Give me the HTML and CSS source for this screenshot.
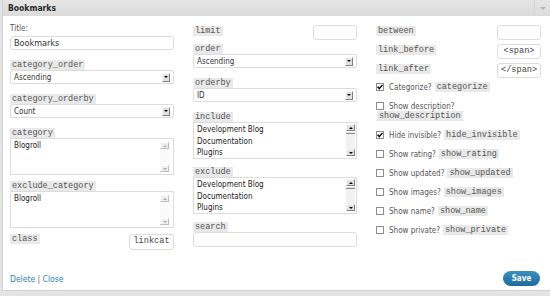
FILE: index.html
```html
<!DOCTYPE html>
<html>
	<head>
		<meta charset="utf-8">
		<title>Bookmarks</title>
		<link rel="stylesheet" href="styles.css">
	</head>
	<body>
		<div class="dialog">
			<div class="titlebar">
				<span class="title">Bookmarks</span>
				<span class="toggle"></span>
			</div>
			<div class="body">
				<div class="cols">
					<!-- left column -->
					<div class="col">
						<div class="field">
							<div class="plain">Title:</div>
							<div class="input big">Bookmarks</div>
						</div>
						<div class="field">
							<div class="key">category_order</div>
							<div class="select">Ascending<span class="arrow"></span></div>
						</div>
						<div class="field">
							<div class="key">category_orderby</div>
							<div class="select">Count<span class="arrow"></span></div>
						</div>
						<div class="field list">
							<div class="key">category</div>
							<div class="listbox">
								<div class="options"><div>Blogroll</div></div>
								<div class="scroll off"><span class="btn up"></span><span class="btn down"></span></div>
							</div>
						</div>
						<div class="field list">
							<div class="key">exclude_category</div>
							<div class="listbox">
								<div class="options"><div>Blogroll</div></div>
								<div class="scroll off"><span class="btn up"></span><span class="btn down"></span></div>
							</div>
						</div>
						<div class="kv">
							<span class="key">class</span>
							<div class="input small mono tall">linkcat</div>
						</div>
					</div>
					<!-- middle column -->
					<div class="col">
						<div class="kv first">
							<span class="key">limit</span>
							<div class="input small"></div>
						</div>
						<div class="field">
							<div class="key">order</div>
							<div class="select">Ascending<span class="arrow"></span></div>
						</div>
						<div class="field">
							<div class="key">orderby</div>
							<div class="select">ID<span class="arrow"></span></div>
						</div>
						<div class="field list">
							<div class="key">include</div>
							<div class="listbox">
								<div class="options"><div>Development Blog</div><div>Documentation</div><div>Plugins</div></div>
								<div class="scroll"><span class="btn up"></span><span class="thumb"></span><span class="btn down"></span></div>
							</div>
						</div>
						<div class="field list">
							<div class="key">exclude</div>
							<div class="listbox">
								<div class="options"><div>Development Blog</div><div>Documentation</div><div>Plugins</div></div>
								<div class="scroll"><span class="btn up"></span><span class="thumb"></span><span class="btn down"></span></div>
							</div>
						</div>
						<div class="field">
							<div class="key">search</div>
							<div class="input"></div>
						</div>
					</div>
					<!-- right column -->
					<div class="col">
						<div class="kv first">
							<span class="key">between</span>
							<div class="input small"></div>
						</div>
						<div class="kv">
							<span class="key">link_before</span>
							<div class="input small mono">&lt;span&gt;</div>
						</div>
						<div class="kv">
							<span class="key">link_after</span>
							<div class="input small mono">&lt;/span&gt;</div>
						</div>
						<div class="checks">
							<div class="check"><span class="box on"><svg width="6" height="6" viewBox="0 0 6 6"><path d="M0.6 2.8 L2.3 4.6 L5.4 0.9" fill="none" stroke="#000" stroke-width="1.4"/></svg></span>Categorize? <span class="key">categorize</span></div>
							<div class="check wrap"><span class="box"></span>Show description?</div>
							<div class="check-key"><span class="key">show_description</span></div>
							<div class="check"><span class="box on"><svg width="6" height="6" viewBox="0 0 6 6"><path d="M0.6 2.8 L2.3 4.6 L5.4 0.9" fill="none" stroke="#000" stroke-width="1.4"/></svg></span>Hide invisible? <span class="key">hide_invisible</span></div>
							<div class="check"><span class="box"></span>Show rating? <span class="key">show_rating</span></div>
							<div class="check"><span class="box"></span>Show updated? <span class="key">show_updated</span></div>
							<div class="check"><span class="box"></span>Show images? <span class="key">show_images</span></div>
							<div class="check"><span class="box"></span>Show name? <span class="key">show_name</span></div>
							<div class="check"><span class="box"></span>Show private? <span class="key">show_private</span></div>
						</div>
					</div>
				</div>
				<div class="footer">
					<span class="links"><a href="#">Delete</a> | <a href="#">Close</a></span>
					<a href="#" class="save">Save</a>
				</div>
			</div>
		</div>
	</body>
</html>
```
FILE: styles.css
```css
*{margin:0;padding:0;box-sizing:border-box;}
body{
	background:#e4e4e4;
	font-family:"DejaVu Sans Condensed","DejaVu Sans",sans-serif;
	font-stretch:condensed;
	font-size:8px;
	color:#333;
}
.dialog{
	margin-left:2px;
	height:291px;
	background:#fff;
	border-left:1px solid #d2d2d2;
	border-bottom:1px solid #d2d2d2;
}
.titlebar{
	height:16px;
	display:flex;
	justify-content:space-between;
	align-items:center;
	background:linear-gradient(#e5e5e5,#dbdbdb);
}
.title{padding-left:5px;font-weight:bold;font-size:8.5px;color:#2b2b2b;}
.toggle{
	width:16px;height:16px;
	border-left:1px solid #d3d3d3;
	display:flex;align-items:center;justify-content:center;
}
.toggle::before{
	content:"";
	border-left:3px solid transparent;
	border-right:3px solid transparent;
	border-top:3px solid #b4b4b4;
}
.body{padding:8px 5px 4px 7px;}
.cols{
	display:grid;
	grid-template-columns:164px 164px 165px;
	column-gap:19px;
	height:226px;
}
.field{margin-bottom:10px;}
.field.list{margin-bottom:8px;}
.col:first-child .field.list{margin-bottom:6px;}
.plain{line-height:10px;margin-bottom:2px;color:#555;}
.key{
	display:table;
	height:10px;
	line-height:10px;
	padding:0 2px;
	background:#e9e9e9;
	font-family:"Liberation Mono",monospace;
	font-size:8.5px;
	color:#555;
}
span.key{display:inline-block;}
.input{
	height:15px;
	border:1px solid #dcdcdc;
	border-radius:3px;
	padding:0 3px;
	line-height:13px;
	background:#fff;
}
.input.big{height:14px;line-height:12px;font-size:9px;}
.input.small{width:44px;text-align:center;}
.input.tall{height:16px;width:45px;}
.mono{font-family:"Liberation Mono",monospace;font-size:8.6px;color:#444;}
.select{
	height:14px;
	border:1px solid #dcdcdc;
	border-radius:2px;
	padding-left:3px;
	display:flex;
	align-items:center;
	justify-content:space-between;
}
.arrow,.btn{
	width:8px;height:8px;
	background:#e2e2e2;
	border:1px solid;
	border-color:#f8f8f8 #808080 #808080 #f8f8f8;
	display:flex;align-items:center;justify-content:center;
}
.arrow{margin-right:3px;height:9px;}
.arrow::before,.btn.down::before{
	content:"";
	border-left:2.5px solid transparent;
	border-right:2.5px solid transparent;
	border-top:2.5px solid #000;
}
.btn.up::before{
	content:"";
	border-left:2.5px solid transparent;
	border-right:2.5px solid transparent;
	border-bottom:2.5px solid #000;
}
.listbox{
	height:37px;
	border:1px solid #dcdcdc;
	display:flex;
}
.options{flex:1;padding:1px 3px;line-height:11.5px;color:#222;}
.scroll{
	width:9px;
	margin:1px 1px 2px 0;
	display:flex;
	flex-direction:column;
	background:#f1f1f1;
}
.scroll .btn{width:9px;height:7px;}
.thumb{height:3px;border-top:1px solid #fff;border-bottom:1px solid #888;background:#e2e2e2;margin-bottom:auto;}
.scroll.off{margin:3px 4px 2px 0;background:#fafafa;justify-content:space-between;}
.scroll.off .btn{background:#efefef;border-color:#fdfdfd #bdbdbd #bdbdbd #fdfdfd;}
.scroll.off .btn::before{border-top-color:#aaa;border-bottom-color:#aaa;}
.kv{
	display:flex;
	justify-content:space-between;
	align-items:flex-start;
	margin-bottom:4px;
}
.kv.first{margin-top:1px;}
.kv .key{margin-top:1px;}
.col:first-child .kv .key{margin-top:0;}
.checks{margin-top:4px;color:#555;}
.check{
	display:flex;
	align-items:center;
	gap:3px;
	height:10px;
	margin-bottom:9px;
}
.check.wrap{margin-bottom:0;}
.check-key{height:10px;margin:0 0 9px 1px;}
.box{
	width:8px;height:8px;
	border:1px solid #8c8c8c;
	background:#fff;
	margin-right:2px;
	display:flex;align-items:center;justify-content:center;
}
.footer{
	margin-top:21px;
	display:flex;
	justify-content:space-between;
	align-items:center;
}
.links{font-size:8.5px;color:#666;}
.links a{color:#2a82b3;text-decoration:none;}
.save{
	width:37px;height:15px;
	border-radius:8px;
	background:linear-gradient(#3a90c2,#1d6b9c);
	color:#fff;
	font-weight:bold;
	font-size:8px;
	text-align:center;
	line-height:15px;
	text-decoration:none;
	margin-right:5px;
}
```
